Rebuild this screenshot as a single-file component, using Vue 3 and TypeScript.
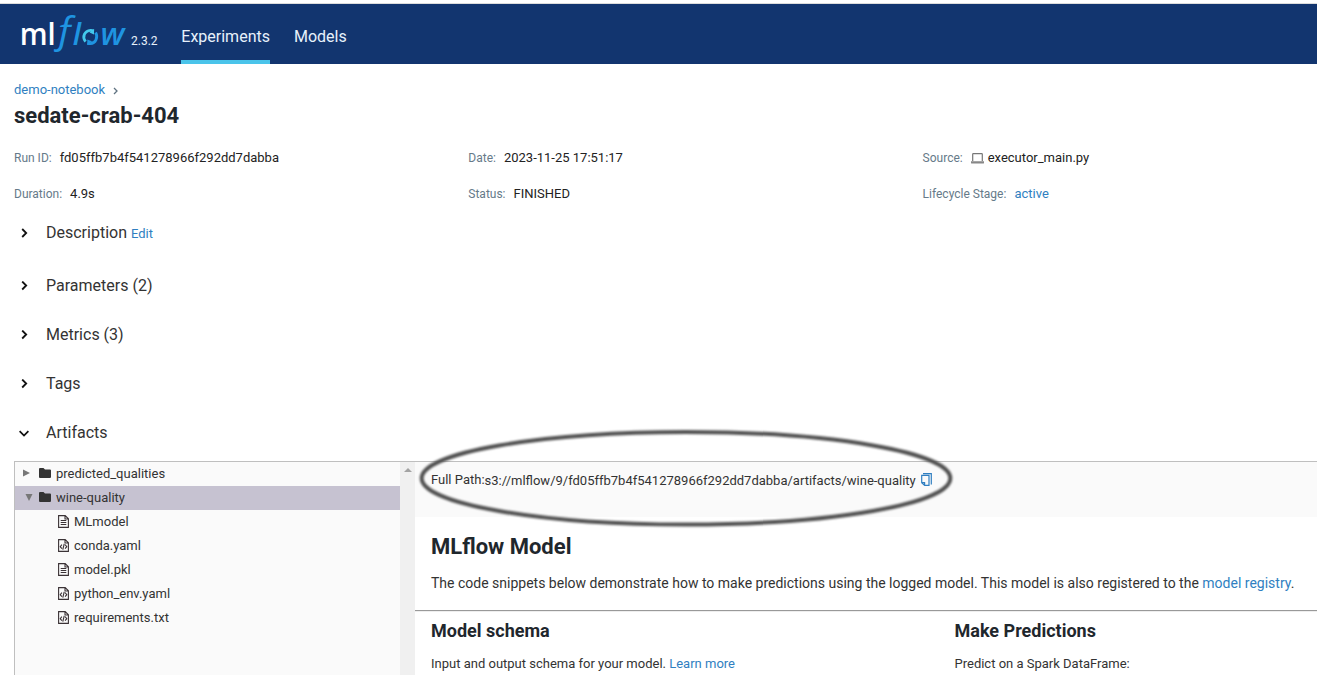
<script setup lang="ts">
interface Field { label: string; value: string; kind?: 'link' | 'source' }
interface Entry { name: string; kind: 'text' | 'code' }

const fields: Field[] = [
  { label: 'Run ID:', value: 'fd05ffb7b4f541278966f292dd7dabba' },
  { label: 'Date:', value: '2023-11-25 17:51:17' },
  { label: 'Source:', value: 'executor_main.py', kind: 'source' },
  { label: 'Duration:', value: '4.9s' },
  { label: 'Status:', value: 'FINISHED' },
  { label: 'Lifecycle Stage:', value: 'active', kind: 'link' },
]
const sections: string[] = ['Parameters (2)', 'Metrics (3)', 'Tags', 'Artifacts']
const files: Entry[] = [
  { name: 'MLmodel', kind: 'text' },
  { name: 'conda.yaml', kind: 'code' },
  { name: 'model.pkl', kind: 'text' },
  { name: 'python_env.yaml', kind: 'code' },
  { name: 'requirements.txt', kind: 'code' },
]
</script>

<template>
  <div class="page">
    <header class="header">
      <svg class="logo" width="112" height="48" viewBox="0 0 112 48">
        <text class="logo-ml" x="0.700" y="35.700" textLength="36" lengthAdjust="spacingAndGlyphs">ml</text>
        <text class="logo-f" x="35" y="34" textLength="22" lengthAdjust="spacingAndGlyphs">ƒ</text>
        <text class="logo-l" x="53.700" y="35.700">l</text>
        <path class="ring light" d="M66.500 32.700C62.800 28 65.500 21.700 71.500 21.300C72.700 21.200 73.800 21.500 74.800 22" />
        <path class="ring dark" d="M76.600 23.500C79.500 28.500 76.500 34.300 71.300 34.700C70.200 34.800 69.300 34.600 68.400 34.200" />
        <path class="tip-light" d="M70.500 23.500L75 20V25.500Z" />
        <path class="tip-dark" d="M73 32.300L68.300 36V30.500Z" />
        <text class="logo-w" x="81.500" y="35.700" textLength="24" lengthAdjust="spacingAndGlyphs">w</text>
      </svg>
      <span class="version">2.3.2</span>
      <nav class="nav">
        <a class="tab active">Experiments</a>
        <a class="tab">Models</a>
      </nav>
    </header>

    <main class="main">
      <div class="crumb">
        <a>demo-notebook</a>
        <svg width="5" height="8" viewBox="0 0 5 8"><path d="M1 1L4 4L1 7" /></svg>
      </div>
      <h1>sedate-crab-404</h1>

      <div class="fields">
        <div v-for="f in fields" :key="f.label" class="field">
          <span class="label">{{ f.label }}</span>
          <svg v-if="f.kind === 'source'" class="laptop" width="13" height="11" viewBox="0 0 13 11">
            <path d="M1.700 8V1.200Q1.700.6 2.300.6H10.700Q11.300.6 11.300 1.200V8" />
            <path class="base" d="M0 8.200H13V9.700Q13 10.600 12 10.600H1Q0 10.600 0 9.700Z" />
          </svg>
          <a v-if="f.kind === 'link'" class="value">{{ f.value }}</a>
          <span v-else class="value">{{ f.value }}</span>
        </div>
      </div>

      <div class="section description">
        <svg class="chev" width="10" height="10" viewBox="0 0 10 10"><path d="M3.200 1L7.200 5L3.200 9" /></svg>
        <span>Description</span><a class="edit">Edit</a>
      </div>
      <div v-for="s in sections" :key="s" class="section">
        <svg class="chev" width="10" height="10" viewBox="0 0 10 10">
          <path v-if="s === 'Artifacts'" d="M.6 3.200L5 7.600L9.400 3.200" />
          <path v-else d="M3.200 .5L7.200 4.500L3.200 8.500" />
        </svg>
        <span>{{ s }}</span>
      </div>

      <div class="artifacts">
        <div class="tree">
          <div class="row folder">
            <svg class="arrow closed" width="8" height="8" viewBox="0 0 8 8"><path d="M0 .5L7 4L0 7.500Z" /></svg>
            <svg class="fold" width="12" height="10" viewBox="0 0 12 10"><path d="M0 1Q0 0 1 0H4.500L6 1.500H11Q12 1.500 12 2.500V9Q12 10 11 10H1Q0 10 0 9Z" /></svg>
            <span>predicted_qualities</span>
          </div>
          <div class="row folder selected">
            <svg class="arrow" width="8" height="8" viewBox="0 0 8 8"><path d="M.5 1H7.500L4 8Z" /></svg>
            <svg class="fold" width="12" height="10" viewBox="0 0 12 10"><path d="M0 1Q0 0 1 0H4.500L6 1.500H11Q12 1.500 12 2.500V9Q12 10 11 10H1Q0 10 0 9Z" /></svg>
            <span>wine-quality</span>
          </div>
          <div v-for="f in files" :key="f.name" class="row file">
            <svg class="doc" width="11" height="13" viewBox="0 0 11 13">
              <path d="M.6 .6H7.200L10.400 3.800V12.400H.6ZM7 .8V4H10.200" />
              <path v-if="f.kind === 'text'" d="M2.700 5.500H8.300M2.700 7.500H8.300M2.700 9.500H8.300" />
              <path v-else d="M3.900 5.700L2.200 7.700L3.900 9.700M7.100 5.700L8.800 7.700L7.100 9.700M6.200 4.800L4.800 10.600" />
            </svg>
            <span>{{ f.name }}</span>
          </div>
        </div>
        <div class="scroll"><svg width="8" height="4" viewBox="0 0 8 4"><path d="M0 4L4 0L8 4Z" /></svg></div>
        <div class="detail">
          <div class="path">
            <span class="path-label">Full Path:</span><span class="path-value">s3://mlflow/9/fd05ffb7b4f541278966f292dd7dabba/artifacts/wine-quality</span>
            <svg class="copy" width="11" height="13" viewBox="0 0 11 13">
              <path d="M2 .6H10.300V11.500M.7 2.400H8V12.400H3.600L.7 9.800ZM.8 9.600H3.600V12.200" />
            </svg>
            <svg class="ellipse" width="540" height="104" viewBox="0 0 540 104">
              <ellipse cx="270" cy="52.200" rx="264.300" ry="46.300" />
            </svg>
          </div>
          <div class="model">
            <h2>MLflow Model</h2>
            <p class="intro">The code snippets below demonstrate how to make predictions using the logged model. This model is also registered to the <a>model registry</a>.</p>
          </div>
          <div class="columns">
            <div>
              <h3>Model schema</h3>
              <p>Input and output schema for your model. <a>Learn more</a></p>
            </div>
            <div>
              <h3>Make Predictions</h3>
              <p>Predict on a Spark DataFrame:</p>
            </div>
          </div>
        </div>
      </div>
    </main>
  </div>
</template>

<style>
html, body { margin: 0; overflow: hidden; background: #fff; }
</style>

<style scoped>
.page { width: 1317px; height: 675px; overflow: hidden; box-sizing: border-box; padding-top: 3px; background: #fff; font-family: Roboto, "Liberation Sans", sans-serif; font-size: 13px; color: #333; }
svg { display: block; flex: none; fill: none; }
h1, h2, h3, p { margin: 0; white-space: nowrap; }
h1, h2, h3 { color: #1f272d; font-weight: 700; }
a { color: #307fc1; text-decoration: none; }
.header { height: 60px; border-top: 1px solid #dcdcdc; background: #12356f; display: flex; color: #e7f1fb; }
.logo { margin: 5px 0 0 19px; overflow: visible; font-family: "Open Sans", sans-serif; }
.logo-ml { fill: #fff; font-size: 31px; font-weight: 600; }
.logo-f, .logo-l, .logo-w { fill: #1f94e1; font-style: italic; font-weight: 600; }
.logo-f { font-size: 39px; font-weight: 500; }
.logo-l { font-size: 30px; }
.logo-w { font-size: 31px; }
.ring { stroke-width: 2.800; }
.light { stroke: #43c9ed; }
.dark { stroke: #1f94e1; }
.tip-light { fill: #43c9ed; }
.tip-dark { fill: #1f94e1; }
.version { width: 50px; font-size: 12px; line-height: 14px; margin-top: 30px; }
.nav { display: flex; gap: 24px; font-size: 16px; margin-left: .3px; }
.tab { height: 56px; line-height: 65px; color: #e7f1fb; border-bottom: 4px solid transparent; }
.tab.active { border-bottom-color: #4ac4ea; }
.main { padding: 17px 0 0 14px; }
.crumb { height: 18px; display: flex; align-items: center; gap: 8px; line-height: 18px; }
.crumb svg { stroke: #5f7281; stroke-width: 1.300; margin-top: 2px; }
h1 { font-size: 22px; line-height: 28px; margin-top: 3px; }
.fields { display: grid; grid-template-columns: 454.300px 454.300px 1fr; grid-auto-rows: 20px; row-gap: 16px; margin-top: 18px; }
.field { display: flex; align-items: center; line-height: 20px; }
.label { font-size: 12px; color: #667a89; margin-right: 8px; }
.value { font-size: 13px; }
span.value { color: #222; }
.laptop { margin-right: 4px; margin-top: 1px; stroke: #777; stroke-width: 1.200; }
.laptop .base { stroke: none; fill: #888; }
.section { display: flex; align-items: center; height: 24px; margin-bottom: 25px; font-size: 16px; line-height: 24px; }
.description { margin: 17px 0 29px; }
.chev { margin: 0 17px 0 5px; stroke: #111; stroke-width: 1.800; }
.edit { font-size: 13px; margin: 2px 0 0 4px; }
.artifacts { display: flex; height: 214px; border-top: 1px solid #bfbfbf; margin-top: -9px; }
.tree { width: 385px; border-left: 1px solid #bfbfbf; background: #fafafa; }
.row { height: 24px; display: flex; align-items: center; line-height: 24px; }
.folder { padding-left: 8px; }
.selected { background: #c6c2d1; }
.arrow { fill: #777; margin-right: 8px; margin-top: -2px; }
.selected .arrow { margin-left: 1.500px; margin-right: 6.500px; }
.fold { fill: #333; margin-right: 5px; margin-top: -2px; }
.file { padding-left: 43px; }
.doc { stroke: #3b3336; stroke-width: 1.100; margin-right: 5px; margin-top: -1px; }
.scroll { width: 15px; background: #f0f0f0; }
.scroll svg { fill: #a3a3a3; margin: 6px 0 0 3.500px; }
.detail { flex: 1; min-width: 0; }
.path { position: relative; display: flex; align-items: flex-start; height: 55px; padding-left: 16px; background: #fafafa; line-height: 18px; }
.path-label { margin-top: 9px; }
.path-value { margin-top: 10px; }
.copy { stroke: #307fc1; stroke-width: 1.200; margin: 11px 0 0 5px; }
.ellipse { position: absolute; left: 1px; top: -36px; z-index: 1; stroke: #505050; stroke-width: 4px; filter: blur(.8px); }
.model { height: 94px; padding-left: 16px; border-bottom: 1px solid #999; box-sizing: border-box; }
h2 { font-size: 22px; line-height: 28px; padding-top: 16px; }
.intro { font-size: 14px; line-height: 20px; margin-top: 12px; }
.columns { display: grid; grid-template-columns: 523.500px 1fr; padding-left: 16px; border-top: 1px solid #eee; }
h3 { font-size: 18px; line-height: 24px; margin-top: 7px; }
.columns p { line-height: 18px; margin-top: 12px; }
</style>
